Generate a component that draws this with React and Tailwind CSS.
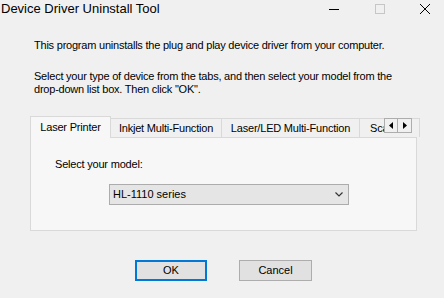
import React from "react";

const font = { fontFamily: '"Liberation Sans", Arial, sans-serif' };

export default function App() {
  return (
    <div
      className="w-[444px] h-[298px] bg-[#f0f0f0] text-black flex flex-col overflow-hidden"
      style={font}
    >
      {/* Title bar */}
      <div className="h-[30px] flex items-start shrink-0">
        <div className="pl-[1px] pt-[0px] text-[13px] leading-[17px] text-black">
          Device Driver Uninstall Tool
        </div>
        <div className="ml-auto flex items-start pt-[4px] pr-[14px] gap-[35px]">
          <svg width="10" height="10" viewBox="0 0 10 10">
            <line x1="0" y1="5.5" x2="10" y2="5.5" stroke="#000" strokeWidth="1" />
          </svg>
          <svg width="10" height="10" viewBox="0 0 10 10" className="ml-[1px]">
            <rect x="0.5" y="0.5" width="9" height="9" fill="none" stroke="#c6c6c6" strokeWidth="1" />
          </svg>
          <svg width="10" height="10" viewBox="0 0 10 10">
            <line x1="0" y1="0" x2="10" y2="10" stroke="#000" strokeWidth="1" />
            <line x1="10" y1="0" x2="0" y2="10" stroke="#000" strokeWidth="1" />
          </svg>
        </div>
      </div>

      <div className="pl-[30px] flex flex-col">
        <p className="ml-[4px] mt-[9px] text-[11px] leading-[13px] tracking-[-0.22px]">
          This program uninstalls the plug and play device driver from your computer.
        </p>
        <p className="ml-[4px] mt-[18px] text-[11px] leading-[13px] tracking-[-0.22px] w-[380px]">
          Select your type of device from the tabs, and then select your model from the drop-down list box. Then click "OK".
        </p>

        {/* Tabs */}
        <div className="relative mt-[20px] w-[387px] h-[21px] flex items-end text-[11px] tracking-[-0.2px]">
          <div className="relative z-10 w-[81px] h-[22px] -mb-[1px] bg-[#f7f7f7] border border-b-0 border-[#d9d9d9] flex items-start justify-center pt-[4px] leading-[13px] shrink-0">
            Laser Printer
          </div>
          <div className="w-[111px] h-[19px] bg-[#f0f0f0] border border-l-0 border-b-0 border-[#d9d9d9] flex items-start justify-center pt-[3px] leading-[13px] shrink-0">
            Inkjet Multi-Function
          </div>
          <div className="w-[138px] h-[19px] bg-[#f0f0f0] border border-l-0 border-b-0 border-[#d9d9d9] flex items-start justify-center pt-[3px] leading-[13px] shrink-0">
            Laser/LED Multi-Function
          </div>
          <div className="w-[60px] h-[19px] bg-[#f0f0f0] border border-l-0 border-b-0 border-[#d9d9d9] flex items-start pl-[10px] pt-[3px] leading-[13px] shrink-0 overflow-hidden whitespace-nowrap">
            Scanner
          </div>
          {/* scroll arrows */}
          <div className="absolute left-[354px] top-[2px] flex">
            <div className="w-[14px] h-[15px] bg-[#f0f0f0] border border-[#adadad] flex items-center justify-center">
              <svg width="4" height="7" viewBox="0 0 4 7">
                <polygon points="4,0 0,3.5 4,7" fill="#000" />
              </svg>
            </div>
            <div className="w-[14px] h-[15px] bg-[#f0f0f0] border border-l-0 border-[#adadad] flex items-center justify-center">
              <svg width="4" height="7" viewBox="0 0 4 7">
                <polygon points="0,0 4,3.5 0,7" fill="#000" />
              </svg>
            </div>
          </div>
        </div>

        {/* Panel */}
        <div className="w-[387px] h-[94px] bg-[#f7f7f7] border border-[#d9d9d9] flex flex-col pl-[24px] pt-[20px]">
          <div className="text-[11px] leading-[13px] tracking-[-0.2px]">Select your model:</div>
          <div className="ml-[54px] mt-[13px] w-[240px] h-[21px] bg-[#e5e5e5] border border-[#acacac] flex items-center pl-[3px] pr-[5px] text-[11px]">
            <span className="leading-[13px]">HL-1110 series</span>
            <svg width="8" height="5" viewBox="0 0 8 5" className="ml-auto">
              <polyline points="0.5,0.5 4,4 7.5,0.5" fill="none" stroke="#333" strokeWidth="1.2" />
            </svg>
          </div>
        </div>
      </div>

      {/* Buttons */}
      <div className="mt-[29px] pl-[135px] flex gap-[32px] text-[11px]">
        <div className="w-[72px] h-[21px] bg-[#e1e1e1] border-2 border-[#0078d7] flex items-center justify-center leading-[13px]">
          OK
        </div>
        <div className="w-[73px] h-[21px] bg-[#e1e1e1] border border-[#adadad] flex items-center justify-center leading-[13px]">
          Cancel
        </div>
      </div>
    </div>
  );
}
